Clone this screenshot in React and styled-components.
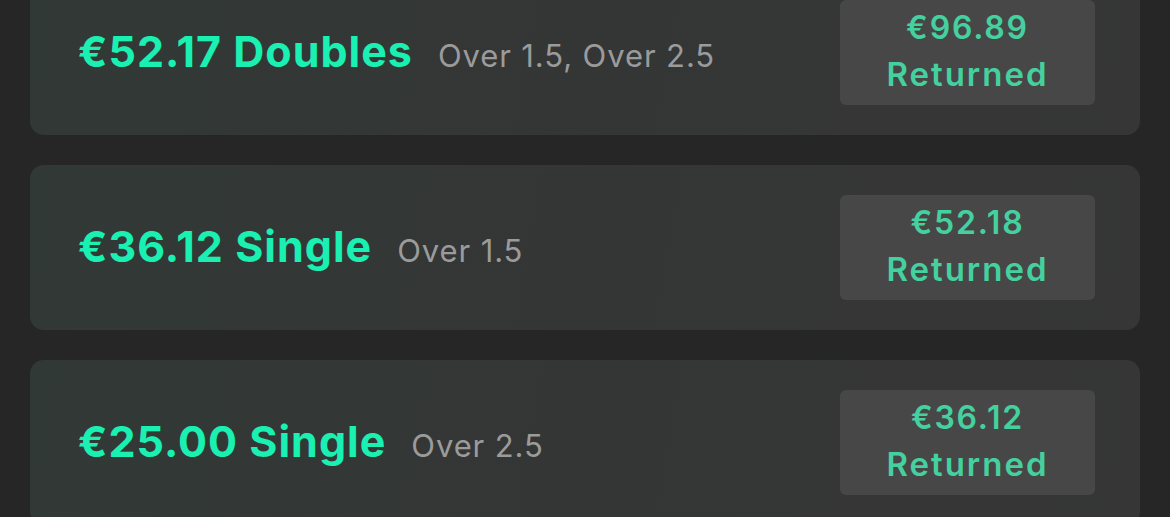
import React from 'react'
import styled, { createGlobalStyle } from 'styled-components'

const GlobalStyle = createGlobalStyle`
  html, body {
    margin: 0;
    padding: 0;
    background: #262626;
    overflow: hidden;
  }
  body {
    font-family: Inter, "Noto Sans", "Liberation Sans", sans-serif;
  }
`

const bets = [
  { stake: '€52.17', type: 'Doubles', markets: 'Over 1.5, Over 2.5', returned: '€96.89' },
  { stake: '€36.12', type: 'Single', markets: 'Over 1.5', returned: '€52.18' },
  { stake: '€25.00', type: 'Single', markets: 'Over 2.5', returned: '€36.12' },
]

const App = () => {
  return (
    <>
      <GlobalStyle />
      <List>
        {bets.map((bet, i) => (
          <BetCard key={i}>
            <Summary>
              <Stake>{bet.stake} {bet.type}</Stake>
              <Markets>{bet.markets}</Markets>
            </Summary>
            <ReturnedBox>
              <Amount>{bet.returned}</Amount>
              <span>Returned</span>
            </ReturnedBox>
          </BetCard>
        ))}
      </List>
    </>
  )
}

export default App

const List = styled.div`
  display: flex;
  flex-direction: column;
  gap: 30px;
  padding: 0 30px;
  margin-top: -30px;
`

const BetCard = styled.div`
  height: 165px;
  box-sizing: border-box;
  border-radius: 14px;
  background: linear-gradient(100deg, #313936 0%, #343635 50%, #363636 100%);
  display: flex;
  align-items: center;
  justify-content: space-between;
  padding: 0 45px 0 48px;
`

const Summary = styled.div`
  display: flex;
  align-items: baseline;
  gap: 25px;
  padding-bottom: 4px;
`

const Stake = styled.div`
  font-size: 43px;
  font-weight: 700;
  color: #19f0b1;
  letter-spacing: 1px;
`

const Markets = styled.div`
  font-size: 31px;
  font-weight: 400;
  color: #9b9b9b;
  letter-spacing: 0.9px;
`

const ReturnedBox = styled.div`
  width: 255px;
  height: 105px;
  box-sizing: border-box;
  padding-bottom: 4px;
  border-radius: 6px;
  background: #474747;
  display: flex;
  flex-direction: column;
  align-items: center;
  justify-content: center;
  color: #45d09f;
  font-weight: 600;
  font-size: 33px;
  line-height: 47px;
  letter-spacing: 2px;
`

const Amount = styled.span`
  font-size: 32px;
  letter-spacing: 1.8px;
`
